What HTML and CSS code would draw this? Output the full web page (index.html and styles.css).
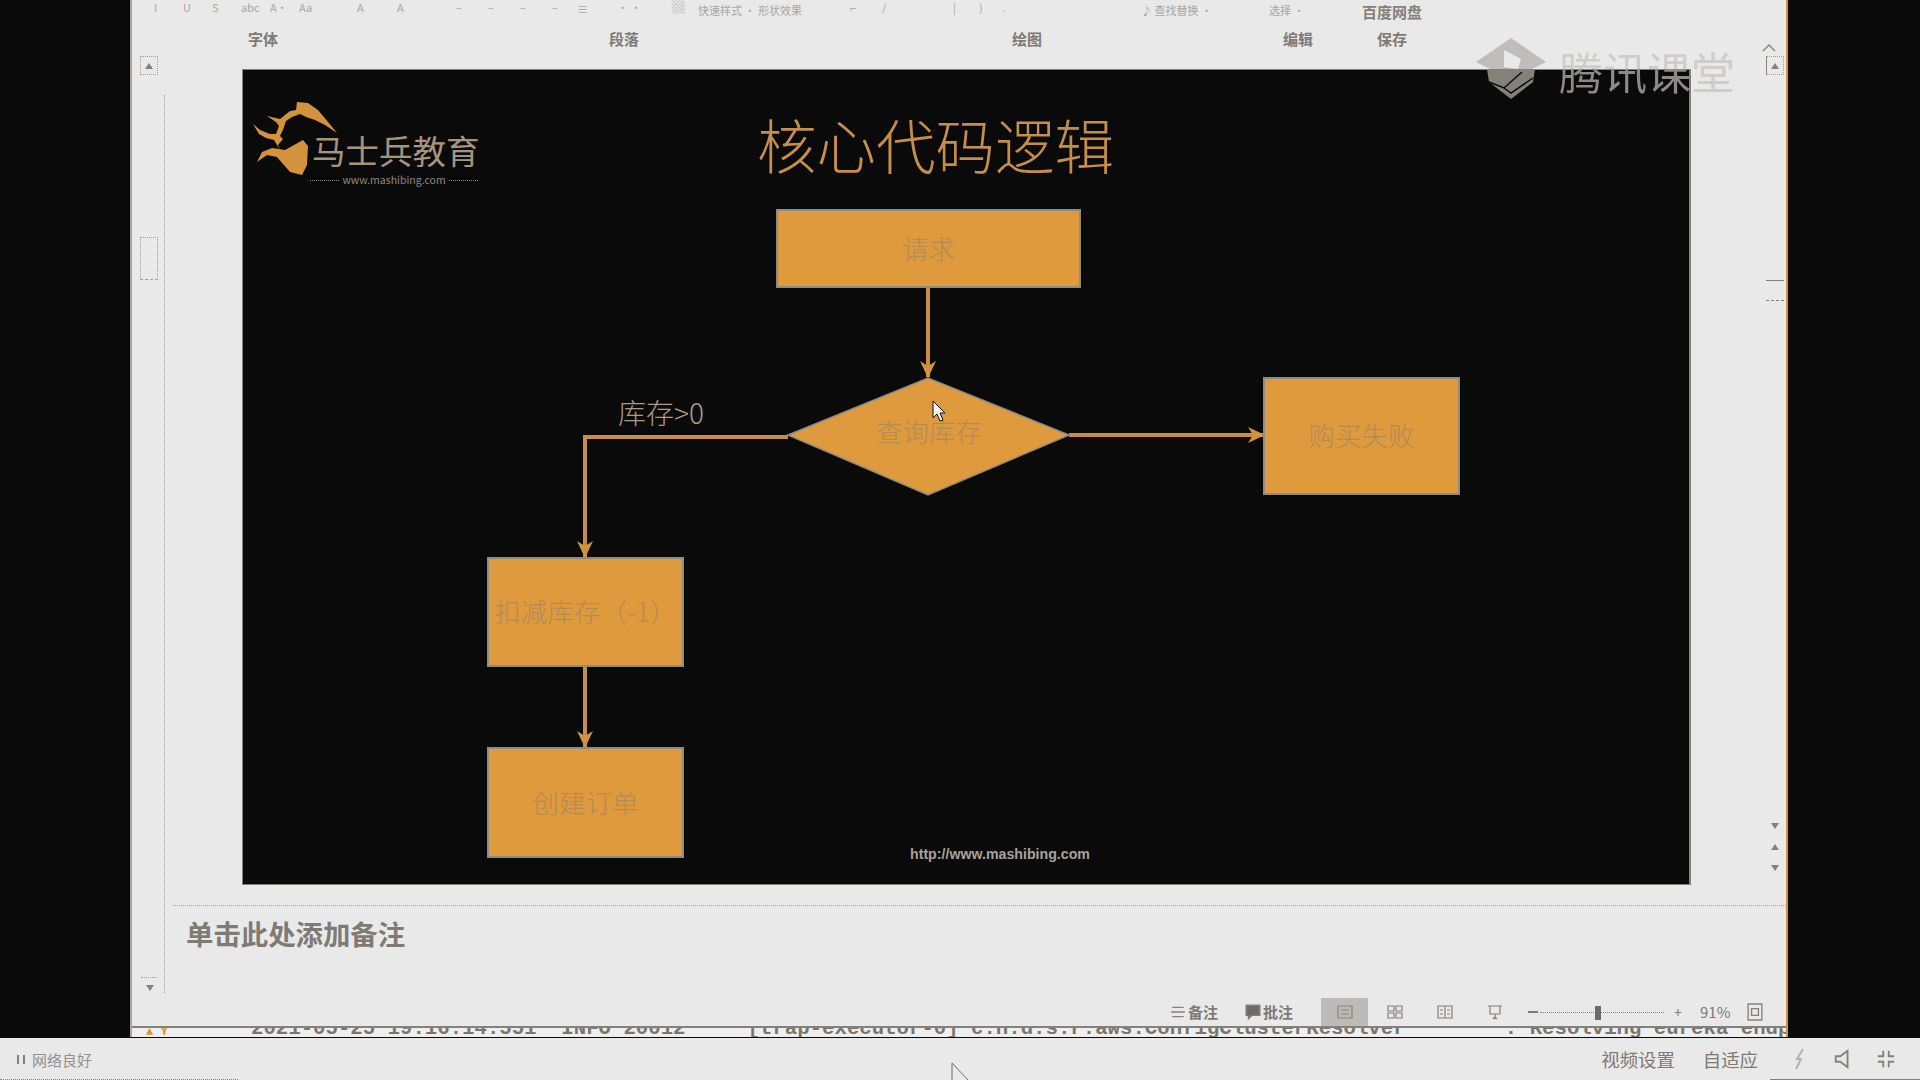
FILE: index.html
```html
<!DOCTYPE html>
<html lang="zh">
<head>
<meta charset="utf-8">
<title>核心代码逻辑</title>
<link rel="stylesheet" href="styles.css">
</head>
<body>
<div class="screen">
  <div class="capture">
    <main class="window">
      <header class="ribbon">
        <div class="tools">
          <span>I</span><span>U</span><span>S</span><span>abc</span><span>A·</span><span>Aa</span><span>A</span><span>A</span>
          <span>–</span><span>–</span><span>–</span><span>–</span><span>≡</span><span>· ·</span>
          <span class="tool-box">▒</span><span>快速样式 · 形状效果</span><span>⌐</span><span>/</span><span>|</span><span>)</span><span>.</span>
          <span>♪ 查找替换 ·</span><span>选择 ·</span><span class="pan">百度网盘</span>
        </div>
        <div class="groups">
          <span>字体</span><span>段落</span><span>绘图</span><span>编辑</span><span>保存</span>
        </div>
      </header>

      <div class="body">
        <aside class="rail">
          <div class="rail-btns">
            <div class="scroll-btn"><i class="tri-up"></i></div>
            <div class="scroll-thumb"></div>
            <div class="rail-down"><i class="tri-down"></i></div>
          </div>
          <div class="rail-line"></div>
        </aside>

        <div class="center">
          <div class="slide-row">
            <section class="slide">
              <svg class="horse" viewBox="0 0 100 90" aria-hidden="true">
                <path d="M57 12 L68 13 L78 20 L88 32 L97 43 L85 35 L75 30 L66 27 L60 24 L52 27 L46 31 L43 40 L40 46 L43 49 L38 55 L40 60 L34 50 L26 48 L19 44 L13 34 L20 40 L30 44 L36 44 L39 36 L36 32 L27 26 L40 29 L50 21 L56 20 Z"/>
                <path d="M63 50 L68 56 L67 75 L62 85 L50 82 L37 67 L27 65 L17 72 L22 62 L32 58 L45 60 Z"/>
              </svg>
              <div class="brand">马士兵教育</div>
              <div class="brand-url"><i></i><span>www.mashibing.com</span><i></i></div>
              <h1 class="title">核心代码逻辑</h1>

              <svg class="links" viewBox="0 0 1449 815" aria-hidden="true">
                <defs>
                  <marker id="arrow" viewBox="0 0 18 18" refX="16" refY="9" markerWidth="18" markerHeight="18" markerUnits="userSpaceOnUse" orient="auto">
                    <path d="M0 1 L17 9 L0 17 L5 9 Z" fill="#d3923e"/>
                  </marker>
                </defs>
                <path class="link" d="M686 219 V308" marker-end="url(#arrow)"/>
                <path class="link" d="M827 366 H1022" marker-end="url(#arrow)"/>
                <path class="link" d="M546 368 H343 V488" marker-end="url(#arrow)"/>
                <path class="link" d="M343 597 V678" marker-end="url(#arrow)"/>
                <polygon class="diamond" points="546,366 686,309 827,366 686,426"/>
              </svg>

              <div class="node n-request">请求</div>
              <div class="node n-query">查询库存</div>
              <div class="node n-fail">购买失败</div>
              <div class="node n-deduct">扣减库存（-1）</div>
              <div class="node n-order">创建订单</div>
              <div class="cond">库存&gt;0</div>
              <div class="site">http://www.mashibing.com</div>
              <svg class="cursor-a" viewBox="0 0 14 22" aria-hidden="true"><path d="M1 1 V18 L5 14 L8 21 L11 20 L8 13 L13 13 Z"/></svg>
            </section>
            <aside class="right-rail">
              <svg class="chev" viewBox="0 0 14 8" aria-hidden="true"><path d="M1 7 L7 1 L13 7"/></svg>
              <div class="scroll-btn small"><i class="tri-up"></i></div>
              <div class="rr-line first"></div>
              <div class="rr-line"></div>
              <div class="rr-arrows"><i class="tri-down"></i><i class="tri-up2"></i><i class="tri-down2"></i></div>
            </aside>
          </div>
          <div class="notes">单击此处添加备注</div>
        </div>
      </div>

      <footer class="status">
        <span class="st-item"><svg class="ic" viewBox="0 0 14 14"><path d="M2 3H12M1 7H13M2 11H12"/></svg>备注</span>
        <span class="st-item comments"><svg class="ic solid" viewBox="0 0 14 14"><path d="M1 1H13V10H6L3 13V10H1Z"/></svg>批注</span>
        <span class="view active"><svg class="ic" viewBox="0 0 18 16"><path d="M2 2H16V14H2ZM5 6H13M5 10H13"/></svg></span>
        <span class="view"><svg class="ic" viewBox="0 0 18 16"><path d="M2 2H8V7H2ZM10 2H16V7H10ZM2 9H8V14H2ZM10 9H16V14H10Z"/></svg></span>
        <span class="view"><svg class="ic" viewBox="0 0 18 16"><path d="M2 2H16V14H2ZM9 2V14M4 6H7M4 10H7M11 6H14M11 10H14"/></svg></span>
        <span class="view"><svg class="ic" viewBox="0 0 18 16"><path d="M2 2H16M4 2V10H14V2M9 10V15M7 15L9 13L11 15"/></svg></span>
        <span class="zoom-minus"></span>
        <span class="slider"><i></i></span>
        <span class="zoom-plus">+</span>
        <span class="pct">91%</span>
        <svg class="ic fit" viewBox="0 0 14 16"><path d="M1 1H13V15H1ZM4 5H10V11H4Z"/></svg>
      </footer>

      <div class="log"><span class="log-mark">▲ ⋎</span><span class="log-text">2021-05-25 19:16:14.551  INFO 20012     [trap-executor-0] c.n.d.s.r.aws.ConfigClusterResolver        : Resolving eureka endpoints</span></div>
    </main>
  </div>

  <div class="player">
    <div class="net"><i class="bars"></i>网络良好</div>
    <div class="player-right">
      <span class="p-text">视频设置</span>
      <span class="p-text">自适应</span>
      <svg class="p-ic faint" viewBox="0 0 16 24"><path d="M11 2 L5 12 L9 12 L4 22"/></svg>
      <svg class="p-ic" viewBox="0 0 22 24"><path d="M3 9 H8 L16 3 V21 L8 15 H3 Z"/></svg>
      <svg class="p-ic" viewBox="0 0 22 24"><path d="M8 3 V9 H2 M14 3 V9 H20 M8 21 V15 H2 M14 21 V15 H20"/></svg>
    </div>
    <svg class="cursor-b" viewBox="0 0 20 24" aria-hidden="true"><path d="M1 1 V20 M1 1 L18 19 H11"/></svg>
    <i class="edge-left"></i><i class="edge-right"></i>
  </div>

  <div class="watermark">
    <svg class="wm-logo" viewBox="0 0 70 62" aria-hidden="true">
      <polygon class="wm-top" points="35,0 70,24 56,31 14,31 0,24"/>
      <polygon class="wm-play" points="28,12 28,29 42,31 45,21"/>
      <polygon class="wm-low" points="11,31 59,31 57,44 35,61 13,44"/>
      <path class="wm-check" d="M13 44 L28 50 L46 34 M28 50 L35 55 L57 40"/>
    </svg>
    <div class="wm-text"><span class="wm-dark">腾讯课</span><span class="wm-light">堂</span></div>
  </div>
</div>
</body>
</html>
```
FILE: styles.css
```css
* { box-sizing: border-box; }
html, body { margin: 0; padding: 0; background: #0a0a0a; }
body { font-family: "Noto Sans CJK SC", "Noto Sans", sans-serif; color: #7e7a74; }

.screen { position: relative; width: 1920px; height: 1080px; display: flex; flex-direction: column; overflow: hidden; }
.capture { height: 1037px; padding-left: 130px; background: #0a0a0a; }
.window {
  width: 1658px; height: 1037px; display: flex; flex-direction: column;
  background: #e9e9e9; border-left: 2px solid #a9a6a2; border-right: 2px solid #d3923e;
}

/* ribbon */
.ribbon { height: 69px; flex: none; }
.tools {
  height: 24px; padding-left: 22px; display: flex; align-items: flex-start;
  font-size: 11px; line-height: 14px; color: #a8a5a1; gap: 0;
}
.tools span { flex: none; width: 29px; }
.tools span:nth-child(6) { width: 58px; }
.tools span:nth-child(7) { width: 40px; }
.tools span:nth-child(8) { width: 59px; }
.tools span:nth-child(9), .tools span:nth-child(10), .tools span:nth-child(11) { width: 32px; }
.tools span:nth-child(12) { width: 25px; }
.tools span:nth-child(13) { width: 40px; margin-top: 2px; }
.tools span:nth-child(14) { width: 55px; }
.tools .tool-box { width: 26px; font-size: 13px; }
.tools span:nth-child(16) { width: 152px; margin-top: 3px; }
.tools span:nth-child(17) { width: 32px; }
.tools span:nth-child(18) { width: 71px; }
.tools span:nth-child(19) { width: 26px; }
.tools span:nth-child(20) { width: 23px; }
.tools span:nth-child(21) { width: 139px; }
.tools span:nth-child(22) { width: 128px; margin-top: 3px; }
.tools span:nth-child(23) { width: 96px; margin-top: 3px; }
.tools .pan { width: 70px; margin-top: 2px; margin-left: -3px; font-size: 15px; line-height: 20px; font-weight: 700; color: #85807a; }

.groups {
  margin-top: 5px; padding-left: 116px; display: grid;
  grid-template-columns: 361px 403px 271px 94px 60px;
  font-size: 15px; line-height: 20px; font-weight: 700; color: #7e7a74;
}

/* body */
.body { height: 929px; flex: none; display: flex; }
.rail { width: 41px; flex: none; display: flex; }
.rail-btns { width: 32px; padding-left: 8px; margin-top: -13px; display: flex; flex-direction: column; }
.scroll-btn {
  width: 18px; height: 19px; border: 1px dotted #a09c97; display: flex; align-items: center; justify-content: center;
}
.scroll-btn.small { border-left: 1px solid #85807a; }
.scroll-thumb { width: 18px; height: 43px; margin-top: 162px; border: 1px dotted #a09c97; border-bottom-style: dashed; }
.rail-down { margin-top: 697px; padding: 7px 0 0 5px; border-top: 1px dotted #a09c97; width: 16px; margin-left: 1px; }
.tri-up, .tri-up2 { display: block; width: 0; height: 0; border: 4px solid transparent; border-top: 0; border-bottom: 6px solid #85807a; }
.tri-down, .tri-down2 { display: block; width: 0; height: 0; border: 4px solid transparent; border-bottom: 0; border-top: 6px solid #85807a; }
.rail-line { margin-top: 26px; height: 898px; border-left: 1px dotted #a09c97; }

.center { width: 1613px; flex: none; display: flex; flex-direction: column; }
.slide-row { height: 836px; flex: none; display: flex; padding-left: 69px; }
.slide {
  position: relative; width: 1449px; height: 816px; flex: none; background: #0a0a0a;
  border-top: 1px solid #85807a; border-left: 1px solid #85807a; border-right: 2px solid #85807a; border-bottom: 1px solid #85807a;
}
.right-rail { width: 18px; margin-left: 75px; margin-top: -25px; display: flex; flex-direction: column; }
.chev { width: 14px; height: 8px; margin-left: -4px; fill: none; stroke: #85807a; stroke-width: 1.4; }
.right-rail .scroll-btn { margin-top: 4px; }
.rr-line { border-top: 1px dashed #85807a; height: 0; width: 18px; margin-top: 19px; }
.rr-line.first { margin-top: 205px; border-top-style: solid; }
.rr-arrows { margin-top: 522px; margin-left: 5px; display: flex; flex-direction: column; gap: 15px; }

/* slide contents */
.horse { position: absolute; left: -3px; top: 20px; width: 100px; height: 90px; fill: #d3923e; }
.brand { position: absolute; left: 69px; top: 58px; font-size: 33.5px; line-height: 44px; white-space: nowrap; color: #a7947c; }
.brand-url { position: absolute; left: 67px; top: 103px; width: 168px; display: flex; align-items: center; gap: 3px; font-size: 10.5px; line-height: 14px; color: #8d8881; }
.brand-url i { flex: 1; border-top: 1px dotted #8d8881; }
.title {
  position: absolute; left: 514px; top: 33px; margin: 0; font-size: 59.5px; line-height: 80px;
  font-weight: 300; white-space: nowrap; color: #c58e4b;
}
.links { position: absolute; left: -1px; top: -1px; width: 1449px; height: 815px; }
.link { fill: none; stroke: #c78e47; stroke-width: 4; }
.diamond { fill: #e09a3e; stroke: #8f8a84; stroke-width: 1.5; }
.node {
  position: absolute; display: flex; align-items: center; justify-content: center; padding-bottom: 3px;
  font-size: 26.5px; white-space: nowrap; color: #b48a55; font-weight: 300;
  background: #e09a3e; border: 2px solid #8f8a84;
}
.n-request { left: 533px; top: 139px; width: 305px; height: 79px; }
.n-query { left: 596px; top: 322px; width: 180px; height: 80px; background: none; border: 0; }
.n-fail { left: 1020px; top: 307px; width: 197px; height: 118px; }
.n-deduct { left: 244px; top: 487px; width: 197px; height: 110px; }
.n-order { left: 244px; top: 677px; width: 197px; height: 111px; }
.cond { position: absolute; left: 375px; top: 322px; font-size: 28px; line-height: 40px; white-space: nowrap; color: #ad9a83; font-weight: 300; }
.site { position: absolute; left: 667px; top: 775px; font-family: "Liberation Sans", Arial, sans-serif; font-size: 14.2px; line-height: 18px; font-weight: 700; color: #a8a29a; white-space: nowrap; }
.cursor-a { position: absolute; left: 689px; top: 330px; width: 14px; height: 22px; fill: #f2f2f2; stroke: #111; stroke-width: 1; }

/* notes */
.notes {
  height: 93px; flex: none; border-top: 1px dotted #a09c97; padding: 8px 0 0 13px;
  font-size: 27.4px; line-height: 38px; font-weight: 700; color: #7e7a74;
}

/* status bar */
.status { height: 28px; flex: none; display: flex; align-items: center; font-size: 15px; line-height: 20px; font-weight: 700; color: #7e7a74; padding-left: 1038px; }
.st-item { display: flex; align-items: center; gap: 2px; width: 75px; white-space: nowrap; }
.st-item.comments { width: 76px; }
.ic { width: 16px; height: 16px; flex: none; fill: none; stroke: #85807a; stroke-width: 1.2; }
.ic.solid { fill: #6e6a65; }
.view { width: 50px; height: 28px; display: flex; align-items: center; justify-content: center; }
.view .ic { width: 18px; }
.view.active { width: 47px; margin-right: 2px; background: #bdbbb8; }
.zoom-minus { width: 10px; border-top: 2px solid #7e7a74; margin-left: 8px; }
.slider { position: relative; width: 124px; margin-left: 2px; border-top: 1px dotted #85807a; height: 0; margin-right: 10px; }
.slider i { position: absolute; left: 55px; top: -7px; width: 6px; height: 14px; background: #6e6a65; }
.zoom-plus { width: 12px; font-weight: 400; font-size: 14px; line-height: 16px; }
.pct { margin-left: 14px; width: 47px; font-weight: 400; font-size: 15px; letter-spacing: 0; }
.fit { margin-left: 0; height: 20px; }

/* console strip */
.log {
  height: 11px; flex: none; overflow: hidden; display: flex; background: #eeeeee; border-top: 2px solid #85807a;
  font-family: "Liberation Mono", monospace; font-size: 20.7px; line-height: 1px; font-weight: 700; color: #7a766f; white-space: pre;
}
.log-mark { width: 119px; padding-left: 14px; font-size: 12px; line-height: 9px; color: #d3923e; flex: none; }
.log-text { flex: none; }

/* player bar */
.player {
  position: relative; height: 43px; flex: none; border-top: 1px solid #0a0a0a; background: #e9e9e9;
  display: flex; align-items: center; justify-content: space-between; padding: 0 24px 0 17px; z-index: 1;
}
.net { display: flex; align-items: center; gap: 7px; font-size: 15px; color: #94908b; }
.bars { width: 8px; height: 9px; border-left: 2px solid #85807a; border-right: 2px solid #85807a; }
.player-right { display: flex; align-items: center; }
.p-text { font-size: 18.4px; line-height: 24px; color: #7e7a74; margin-right: 28px; white-space: nowrap; }
.p-text + .p-text { margin-right: 34px; }
.p-ic { width: 20px; height: 24px; fill: none; stroke: #85807a; stroke-width: 2; margin-right: 23px; }
.p-ic.faint { stroke: #b4b1ad; width: 16px; margin-right: 25px; }
.p-ic:last-child { margin-right: 0; }
.cursor-b { position: absolute; left: 951px; top: 24px; width: 20px; height: 24px; fill: none; stroke: #6e6a65; stroke-width: 1; }
.edge-left { position: absolute; left: 0; bottom: 0; width: 238px; border-bottom: 1px dotted #85807a; }
.edge-right { position: absolute; right: 0; bottom: 0; width: 150px; border-bottom: 1px solid #85807a; }

/* watermark */
.watermark { position: absolute; left: 1476px; top: 38px; display: flex; gap: 13px; z-index: 2; }
.wm-logo { width: 70px; height: 62px; flex: none; }
.wm-top { fill: #bfbdba; }
.wm-play { fill: #e9e9e9; }
.wm-low { fill: #85807a; }
.wm-check { fill: none; stroke: #0a0a0a; stroke-width: 1.5; }
.wm-text { font-size: 44px; line-height: 52px; margin-top: 7px; white-space: nowrap; display: flex; }
.wm-dark {
  background: linear-gradient(#cfcdca 0 24px, #8e8984 24px);
  -webkit-background-clip: text; background-clip: text; color: transparent;
}
.wm-light { color: #cfcdca; }
```
